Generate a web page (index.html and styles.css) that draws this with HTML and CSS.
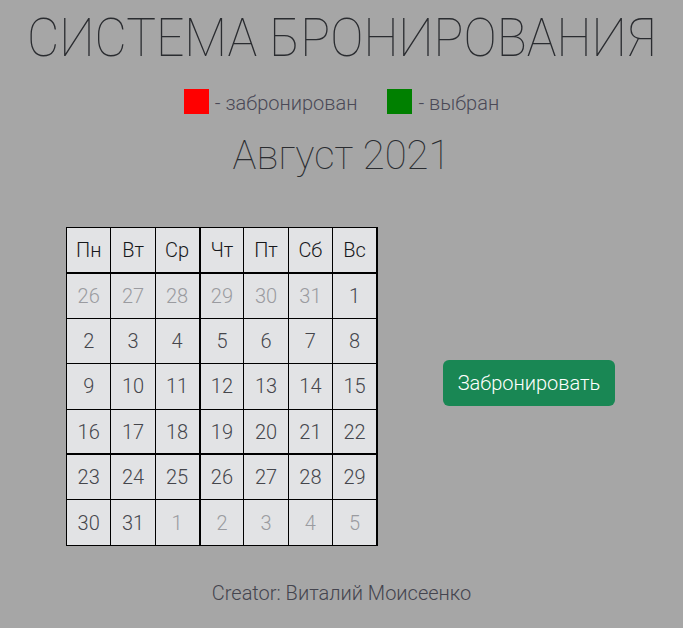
FILE: index.html
```html
<!DOCTYPE html>
<html lang="ru">
<head>
<meta charset="utf-8">
<title>Система бронирования</title>
<link rel="stylesheet" href="styles.css">
</head>
<body>
<h1 class="title"><span class="title-text">СИСТЕМА БРОНИРОВАНИЯ</span></h1>
<div class="legend">
  <div class="legend-item"><span class="swatch swatch-red"></span><span class="legend-text">- забронирован</span></div>
  <div class="legend-item"><span class="swatch swatch-green"></span><span class="legend-text">- выбран</span></div>
</div>
<h2 class="month">Август 2021</h2>
<div class="main">
  <table class="calendar">
    <thead>
      <tr><th>Пн</th><th>Вт</th><th>Ср</th><th>Чт</th><th>Пт</th><th>Сб</th><th>Вс</th></tr>
    </thead>
    <tbody>
      <tr><td class="other">26</td><td class="other">27</td><td class="other">28</td><td class="other">29</td><td class="other">30</td><td class="other">31</td><td>1</td></tr>
      <tr><td>2</td><td>3</td><td>4</td><td>5</td><td>6</td><td>7</td><td>8</td></tr>
      <tr><td>9</td><td>10</td><td>11</td><td>12</td><td>13</td><td>14</td><td>15</td></tr>
      <tr class="row-split"><td>16</td><td>17</td><td>18</td><td>19</td><td>20</td><td>21</td><td>22</td></tr>
      <tr><td>23</td><td>24</td><td>25</td><td>26</td><td>27</td><td>28</td><td>29</td></tr>
      <tr><td>30</td><td>31</td><td class="other">1</td><td class="other">2</td><td class="other">3</td><td class="other">4</td><td class="other">5</td></tr>
    </tbody>
  </table>
  <button class="book-btn" type="button">Забронировать</button>
</div>
<footer class="footer">Creator: Виталий Моисеенко</footer>
</body>
</html>
```
FILE: styles.css
```css
* { box-sizing: border-box; }

body {
  margin: 0;
  background: #a6a6a6;
  color: #212529;
  font-family: Roboto, "Noto Sans", sans-serif;
  font-weight: 300;
}

.title {
  margin: 5px 0 0;
  font-size: 53px;
  line-height: 66px;
  font-weight: 100;
  text-align: center;
  color: #2a2c30;
  white-space: nowrap;
}

.title-text {
  display: inline-block;
  transform: scaleX(0.94);
  transform-origin: center;
}

.legend {
  display: flex;
  justify-content: center;
  gap: 30px;
  margin-top: 18px;
  height: 25px;
}

.legend-item {
  display: flex;
  align-items: center;
  gap: 6px;
}

.swatch {
  display: block;
  width: 25px;
  height: 25px;
}

.swatch-red { background: #ff0000; }
.swatch-green { background: #008000; }

.legend-text {
  font-size: 20px;
  line-height: 25px;
  color: #4a4956;
  padding-top: 4px;
}

.month {
  margin: 18px 0 0;
  font-size: 40px;
  line-height: 48px;
  font-weight: 100;
  text-align: center;
  color: #2a2c30;
}

.main {
  display: flex;
  align-items: center;
  padding-left: 66px;
  margin-top: 47px;
}

.calendar {
  border-collapse: collapse;
  table-layout: fixed;
  width: 312px;
  background: #e2e3e5;
  border: 1px solid #000;
  border-right-width: 2px;
}

.calendar tr {
  height: 45.4px;
}

.calendar th,
.calendar td {
  border: 1px solid #000;
  text-align: center;
  font-size: 20px;
  padding: 0;
}

.calendar th {
  font-weight: 300;
  color: #16171a;
  border-bottom-width: 2px;
}

.calendar td {
  font-weight: 300;
  color: #45464c;
}

.calendar th:nth-child(3),
.calendar td:nth-child(3) {
  border-right-width: 2px;
}

.calendar .row-split td {
  border-bottom-width: 2px;
}

.calendar td.other {
  color: #9a9ba0;
}

.book-btn {
  margin-left: 65px;
  margin-bottom: 6px;
  width: 172px;
  height: 46px;
  border: none;
  border-radius: 6px;
  background: #198754;
  color: #fff;
  font-family: Roboto, "Noto Sans", sans-serif;
  font-size: 20px;
  font-weight: 300;
  padding: 0;
}

.footer {
  margin-top: 35px;
  text-align: center;
  font-size: 20px;
  line-height: 24px;
  color: #44444e;
}
```
